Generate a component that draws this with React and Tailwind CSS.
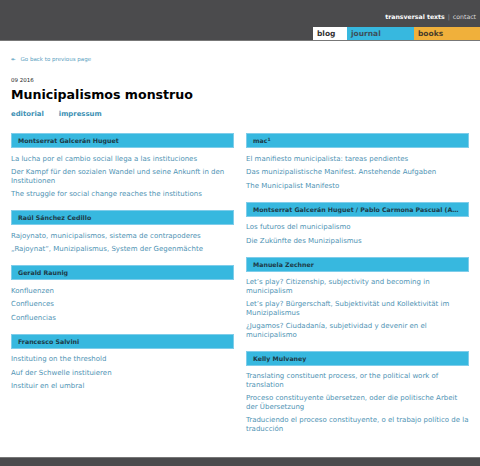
import React from 'react'

const LEFT = [
  {
    author: 'Montserrat Galcerán Huguet',
    links: [
      'La lucha por el cambio social llega a las instituciones',
      'Der Kampf für den sozialen Wandel und seine Ankunft in den Institutionen',
      'The struggle for social change reaches the institutions',
    ],
  },
  {
    author: 'Raúl Sánchez Cedillo',
    links: [
      'Rajoynato, municipalismos, sistema de contrapoderes',
      '„Rajoynat“, Munizipalismus, System der Gegenmächte',
    ],
  },
  {
    author: 'Gerald Raunig',
    links: ['Konfluenzen', 'Confluences', 'Confluencias'],
  },
  {
    author: 'Francesco Salvini',
    links: ['Instituting on the threshold', 'Auf der Schwelle instituieren', 'Instituir en el umbral'],
  },
]

const RIGHT = [
  {
    author: (
      <>
        mac<sup className="text-[4.5px]">1</sup>
      </>
    ),
    links: [
      'El manifiesto municipalista: tareas pendientes',
      'Das munizipalistische Manifest. Anstehende Aufgaben',
      'The Municipalist Manifesto',
    ],
  },
  {
    author: 'Montserrat Galcerán Huguet / Pablo Carmona Pascual (Ahora Madrid)',
    links: ['Los futuros del municipalismo', 'Die Zukünfte des Munizipalismus'],
  },
  {
    author: 'Manuela Zechner',
    links: [
      'Let’s play? Citizenship, subjectivity and becoming in municipalism',
      'Let’s play? Bürgerschaft, Subjektivität und Kollektivität im Munizipalismus',
      '¿Jugamos? Ciudadanía, subjetividad y devenir en el municipalismo',
    ],
  },
  {
    author: 'Kelly Mulvaney',
    links: [
      'Translating constituent process, or the political work of translation',
      'Proceso constituyente übersetzen, oder die politische Arbeit der Übersetzung',
      'Traduciendo el proceso constituyente, o el trabajo político de la traducción',
    ],
  },
]

function Group({ author, links }) {
  return (
    <div className="mb-[11.5px]">
      <div className="h-[15px] truncate border border-[#7fcdea] bg-[#37b8df] px-[6px] text-[6.25px] font-bold leading-[13px] text-[#1d3a47]">
        {author}
      </div>
      <ul className="mt-[6.5px] space-y-[5px]">
        {links.map((l) => (
          <li key={l} className="text-[7px] leading-[8.5px] text-[#4f93b4]">
            {l}
          </li>
        ))}
      </ul>
    </div>
  )
}

export default function App() {
  return (
    <div className="flex min-h-[466px] flex-col bg-white font-['DejaVu_Sans',sans-serif]">
      <header className="h-[41px] border-b border-[#777] bg-[#4b4b4d]">
        <div className="flex justify-end pr-[4px] pt-[13px] text-[6.2px] leading-[8px] text-white">
          <span className="font-bold">transversal texts</span>
          <span className="mx-[3px] text-[#999]">|</span>
          <span className="text-[#ddd]">contact</span>
        </div>
        <nav className="mt-[6px] flex justify-end text-[7.5px] font-bold leading-[13px]">
          <span className="w-[34px] bg-white pl-[4px] text-[#333]">blog</span>
          <span className="w-[67px] bg-[#37b8df] pl-[4px] text-[#3d4f5a]">journal</span>
          <span className="w-[66px] bg-[#f0b03b] pl-[4px] text-[#4a3d2a]">books</span>
        </nav>
      </header>

      <main className="flex-1 px-[11px] pt-[14px]">
        <div className="flex items-center gap-[5px] text-[5.5px] leading-[8px] text-[#5aa0c0]">
          <span>↞</span>
          <span>Go back to previous page</span>
        </div>
        <div className="mt-[13px] text-[5.5px] leading-[8px] text-[#222]">09 2016</div>
        <h1 className="mt-[2px] text-[12.6px] font-bold leading-[18px] text-black">Municipalismos monstruo</h1>
        <div className="mt-[5px] flex gap-[15px] text-[6.9px] font-bold leading-[10px] text-[#3b8fb3]">
          <span>editorial</span>
          <span>impressum</span>
        </div>

        <div className="mt-[14px] grid grid-cols-2 gap-x-[12px]">
          <div className="min-w-0">
            {LEFT.map((g) => (
              <Group key={g.author} {...g} />
            ))}
          </div>
          <div className="min-w-0">
            {RIGHT.map((g, i) => (
              <Group key={i} {...g} />
            ))}
          </div>
        </div>
      </main>

      <footer className="h-[9px] border-t border-[#777] bg-[#4b4b4d]" />
    </div>
  )
}
